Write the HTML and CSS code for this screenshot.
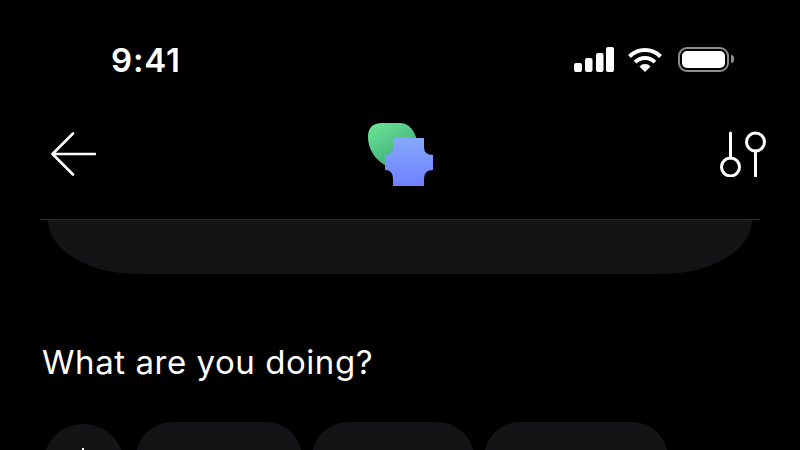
FILE: index.html
```html
<!DOCTYPE html>
<html lang="en">
<head>
<meta charset="utf-8">
<title>What are you doing?</title>
<link rel="stylesheet" href="styles.css">
</head>
<body>
<div class="screen">
  <header class="status">
    <span class="time">9:41</span>
    <div class="status-icons">
      <svg class="signal" width="40" height="25" viewBox="0 0 40 25" fill="#fff">
        <rect x="0" y="16" width="8" height="9" rx="2"/>
        <rect x="11" y="11" width="7.5" height="14" rx="2"/>
        <rect x="22" y="6" width="7.5" height="19" rx="2"/>
        <rect x="32" y="0" width="8" height="25" rx="2"/>
      </svg>
      <svg class="wifi" width="36" height="24" viewBox="0 0 36 24" fill="none" stroke="#fff" stroke-width="4">
        <path d="M2.5 8.5a22 22 0 0 1 31 0"/>
        <path d="M8.1 14.1a14 14 0 0 1 19.8 0"/>
        <path d="M18 24l-5.6-5.6a8 8 0 0 1 11.2 0z" fill="#fff" stroke="none"/>
      </svg>
      <div class="battery">
        <div class="battery-body"><div class="battery-level"></div></div>
        <div class="battery-nub"></div>
      </div>
    </div>
  </header>

  <nav class="nav">
    <svg class="back" width="45" height="44" viewBox="0 0 45 44" fill="none" stroke="#fff" stroke-width="2.6" stroke-linecap="round" stroke-linejoin="round">
      <path d="M44 22H2"/>
      <path d="M22 1.500 1.500 22 22 42.500"/>
    </svg>
    <svg class="logo" width="66" height="64" viewBox="0 0 66 64">
      <defs>
        <linearGradient id="leaf" x1="0" y1="0" x2="0.6" y2="1">
          <stop offset="0" stop-color="#6fe796"/>
          <stop offset="1" stop-color="#36a878"/>
        </linearGradient>
        <linearGradient id="plus" x1="0.5" y1="0" x2="0.5" y2="1">
          <stop offset="0" stop-color="#84a8fa"/>
          <stop offset="1" stop-color="#6f80ff"/>
        </linearGradient>
      </defs>
      <path d="M0 14Q0 0 14 0H32C40 0 45 6 48 14V48H36C22 48 0 36 0 14Z" fill="url(#leaf)"/>
      <path d="M25 15H56V24Q56 32 65 32V47Q56 47 56 56V63H25V56Q25 47 17 47V32Q25 32 25 24Z" fill="url(#plus)"/>
    </svg>
    <svg class="filters" width="46" height="46" viewBox="0 0 46 46" fill="none" stroke="#fff" stroke-width="3" stroke-linecap="round">
      <path d="M10.500 2V27"/>
      <circle cx="10.500" cy="36" r="9"/>
      <circle cx="35.500" cy="11" r="9"/>
      <path d="M35.500 20V45"/>
    </svg>
  </nav>

  <section class="panel">
    <div class="panel-rule"></div>
    <div class="panel-sheet"></div>
  </section>

  <h1 class="title">What are you doing?</h1>

  <div class="chips">
    <button class="chip-add" type="button" aria-label="Add"><span class="plus-mark"></span></button>
    <div class="chip chip-a"></div>
    <div class="chip chip-b"></div>
    <div class="chip chip-c"></div>
  </div>
</div>
</body>
</html>
```

FILE: styles.css
```css
* {
  box-sizing: border-box;
}

html,
body {
  margin: 0;
  height: 100%;
  background: #000;
}

.screen {
  width: 800px;
  height: 450px;
  overflow: hidden;
  background: #000;
  color: #fff;
  font-family: Inter, "Liberation Sans", sans-serif;
}

.status {
  display: flex;
  justify-content: space-between;
  align-items: center;
  height: 26px;
  margin-top: 46px;
  padding: 0 66px 0 111px;
}

.time {
  position: relative;
  top: 1px;
  font-size: 33px;
  font-weight: 600;
  line-height: 26px;
  letter-spacing: 0.8px;
}

.status-icons {
  display: flex;
  align-items: flex-end;
  gap: 15px;
}

.signal,
.wifi,
.back,
.logo,
.filters {
  display: block;
  flex: none;
}

.signal {
  margin-right: -2px;
}

.battery {
  display: flex;
  align-items: center;
  gap: 2px;
}

.battery-body {
  width: 51px;
  height: 25px;
  padding: 2px;
  border: 2px solid #8c8c8e;
  border-radius: 9px;
}

.battery-level {
  height: 100%;
  background: #fff;
  border-radius: 5px;
}

.battery-nub {
  width: 3px;
  height: 8px;
  background: #8c8c8e;
  border-radius: 0 3px 3px 0;
}

.nav {
  display: grid;
  grid-template-columns: 1fr auto 1fr;
  align-items: center;
  height: 64px;
  margin-top: 50px;
  padding: 0 34px;
}

.back {
  margin-left: 17px;
}

.logo {
  margin: 1px 0 -1px 2px;
}

.filters {
  justify-self: end;
}

.panel {
  margin: 33px 40px 0;
}

.panel-rule {
  height: 1px;
  background: #2c2c2e;
}

.panel-sheet {
  height: 54px;
  margin: 0 8px;
  background: #141416;
  border-radius: 0 0 90px 90px / 0 0 54px 54px;
}

.title {
  margin: 68px 0 0 42px;
  font-size: 33px;
  font-weight: 400;
  line-height: 40px;
  letter-spacing: 0.55px;
}

.chips {
  display: flex;
  align-items: flex-start;
  gap: 10px;
  margin: 40px 0 0 43px;
}

.chip-add {
  position: relative;
  flex: none;
  width: 81px;
  height: 81px;
  margin: 2px 2px 0 0;
  padding: 0;
  border: 0;
  border-radius: 50%;
  background: #141416;
}

.plus-mark {
  position: absolute;
  top: 24px;
  left: 39px;
  width: 2px;
  height: 30px;
  background: #fff;
}

.chip {
  flex: none;
  height: 80px;
  border-radius: 36px;
  background: #141416;
}

.chip-a {
  width: 166px;
}

.chip-b {
  width: 162px;
}

.chip-c {
  width: 184px;
}
```
